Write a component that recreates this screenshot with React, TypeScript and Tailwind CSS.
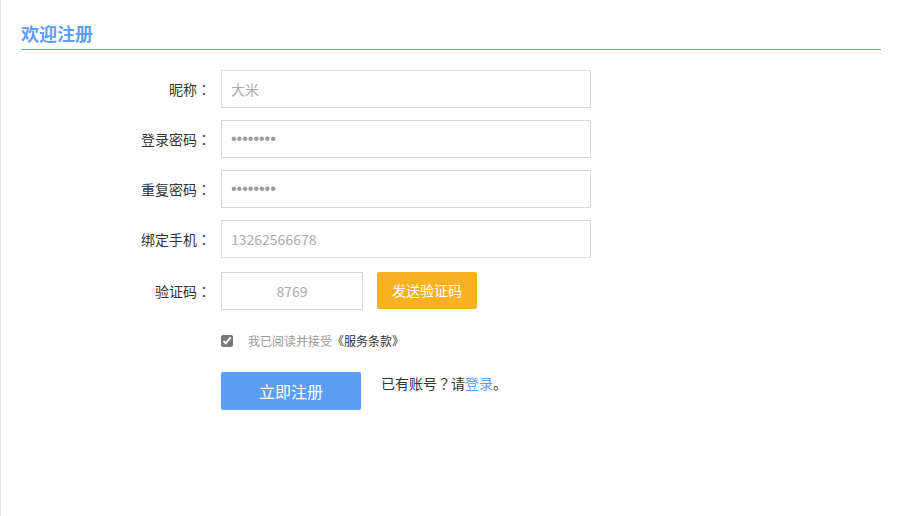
const font = { fontFamily: '"Noto Sans CJK SC", "Noto Sans", sans-serif' }

// full-width punctuation centred in its box, as in the reference
function Punct({ ch }: { ch: string }) {
  return <span style={{ fontFamily: '"Noto Sans CJK TC", sans-serif' }}>{ch}</span>
}

function Row({ label, children }: { label: string; children: React.ReactNode }) {
  return (
    <div className="flex items-center">
      <label className="w-[200px] shrink-0 pr-[10px] text-right text-[14px] text-[#333]">
        {label}
        <Punct ch="：" />
      </label>
      {children}
    </div>
  )
}

const inputCls =
  'h-[38px] w-[370px] border border-[#d9d9d9] bg-white pl-[9px] text-[14px] text-[#aaa] outline-none'

const pwdCls =
  'h-[38px] w-[370px] border border-[#d9d9d9] bg-white pl-[9px] font-["Liberation_Sans",sans-serif] text-[16px] text-[#999] outline-none'

export default function App() {
  return (
    <div className="h-[516px] w-[899px] border-l border-[#e2e2e2] bg-white pl-[20px] pr-[18px]" style={font}>
      <h3 className="border-b border-[#6c9bd9] pt-[21px] pb-[4px] text-[18px] leading-[24px] font-bold text-[#5f9cf4]">
        欢迎注册
      </h3>

      <form className="mt-[20px] flex flex-col" onSubmit={(e) => e.preventDefault()}>
        <div className="flex flex-col gap-[12px]">
          <Row label="昵称">
            <input className={inputCls} defaultValue="大米" />
          </Row>
          <Row label="登录密码">
            <input className={pwdCls} type="password" defaultValue="12345678" />
          </Row>
          <Row label="重复密码">
            <input className={pwdCls} type="password" defaultValue="12345678" />
          </Row>
          <Row label="绑定手机">
            <input className={inputCls} defaultValue="13262566678" />
          </Row>
        </div>

        <div className="mt-[14px]">
          <Row label="验证码">
            <input
              className="h-[38px] w-[142px] border border-[#d9d9d9] bg-white text-center text-[14px] text-[#aaa] outline-none"
              defaultValue="8769"
            />
            <button
              type="button"
              className="ml-[14px] h-[37px] w-[100px] self-start rounded-[2px] bg-[#fbb124] text-[14px] text-white"
            >
              发送验证码
            </button>
          </Row>
        </div>

        <div className="mt-[22px] flex items-center pl-[200px]">
          <input type="checkbox" defaultChecked className="m-0 h-[12px] w-[12px] accent-[#777]" />
          <span className="ml-[15px] text-[12px] text-[#999]">
            我已阅读并接受<span className="text-[#333]">《服务条款》</span>
          </span>
        </div>

        <div className="mt-[22px] flex items-start pl-[200px]">
          <button type="submit" className="h-[38px] w-[140px] rounded-[2px] bg-[#5c9ef4] text-[16px] text-white">
            立即注册
          </button>
          <p className="ml-[20px] pt-[1px] text-[14px] leading-[20px] text-[#333]">
            已有账号
            <Punct ch="？" />
            请<a className="text-[#5c9ef4]">登录</a>。
          </p>
        </div>
      </form>
    </div>
  )
}
